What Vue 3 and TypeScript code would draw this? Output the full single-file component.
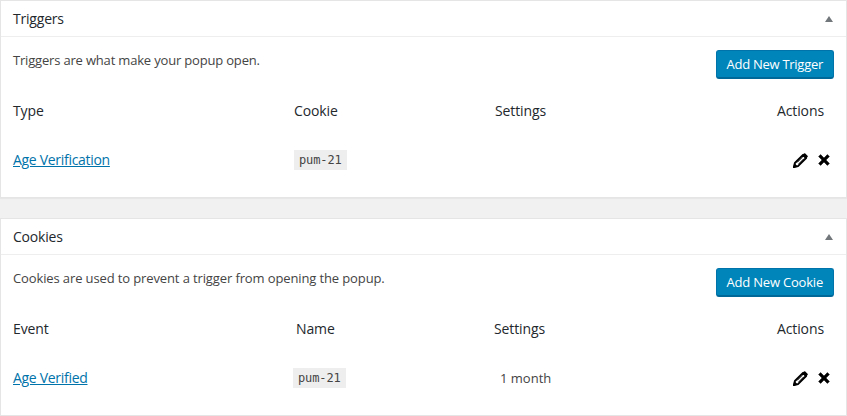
<script setup lang="ts">
interface Panel {
  key: string
  title: string
  intro: string
  button: string
  heads: [string, string, string, string]
  link: string
  setting: string
}
const panels: Panel[] = [
  { key: 'triggers', title: 'Triggers', intro: 'Triggers are what make your popup open.', button: 'Add New Trigger', heads: ['Type', 'Cookie', 'Settings', 'Actions'], link: 'Age Verification', setting: '' },
  { key: 'cookies', title: 'Cookies', intro: 'Cookies are used to prevent a trigger from opening the popup.', button: 'Add New Cookie', heads: ['Event', 'Name', 'Settings', 'Actions'], link: 'Age Verified', setting: '1 month' }
]
</script>

<template>
  <div class="page">
    <section v-for="p in panels" :key="p.key" class="panel" :class="p.key">
      <header class="head">
        <h2>{{ p.title }}</h2>
        <span class="arrow"></span>
      </header>
      <div class="body">
        <div class="intro">
          <p>{{ p.intro }}</p>
          <button type="button" class="btn">{{ p.button }}</button>
        </div>
        <div class="row heads">
          <span>{{ p.heads[0] }}</span>
          <span>{{ p.heads[1] }}</span>
          <span>{{ p.heads[2] }}</span>
          <span class="end">{{ p.heads[3] }}</span>
        </div>
        <div class="row item">
          <a href="#" class="link">{{ p.link }}</a>
          <span class="code-cell"><code>pum-21</code></span>
          <span class="setting">{{ p.setting }}</span>
          <span class="actions">
            <svg width="15" height="15" viewBox="0 0 15 15" aria-hidden="true">
              <path d="M.8 14.2 1.9 10 10 1.9 13.1 5 5 13.1Z" fill="#fff" stroke="#000" stroke-width="1.9" stroke-linejoin="round" />
              <path d="M9.2 2.2 10.9.5a1 1 0 0 1 1.4 0l2.2 2.2a1 1 0 0 1 0 1.4l-1.7 1.7ZM.4 14.6l.9-4.6 3.7 3.7Z" fill="#000" />
              <path d="M4.2 9.4 9.4 4.2M5.7 10.9l5.2-5.2" stroke="#000" stroke-width="1" fill="none" />
            </svg>
            <svg width="12" height="12" viewBox="0 0 12 12" aria-hidden="true">
              <path d="M2.6.6 6 4 9.4.6 11.4 2.6 8 6l3.4 3.4-2 2L6 8l-3.4 3.4-2-2L4 6 .6 2.6Z" fill="#000" stroke="#000" stroke-width=".5" stroke-linejoin="round" />
            </svg>
          </span>
        </div>
      </div>
    </section>
  </div>
</template>

<style scoped>
.page {
  width: 847px;
  height: 416px;
  background: #f1f1f1;
  font-family: "Open Sans", "Noto Sans", sans-serif;
  font-size: 13px;
  color: #444;
  display: flex;
  flex-direction: column;
  gap: 20px;
  overflow: hidden;
}
.panel {
  background: #fff;
  border: 1px solid #e5e5e5;
  box-shadow: 0 1px 1px rgba(0, 0, 0, 0.04);
  height: 198px;
  flex: none;
  box-sizing: border-box;
}
.head {
  height: 35px;
  border-bottom: 1px solid #eee;
  display: flex;
  align-items: center;
  justify-content: space-between;
  padding: 0 13px 0 12px;
}
h2 {
  margin: 0;
  font-size: 14px;
  font-weight: 500;
  color: #23282d;
  letter-spacing: -0.2px;
}
.arrow {
  width: 0;
  height: 0;
  border-left: 4px solid transparent;
  border-right: 4px solid transparent;
  border-bottom: 6px solid #72777c;
}
.body {
  padding: 0 12px;
}
.intro {
  height: 50px;
  display: flex;
  align-items: flex-start;
  justify-content: space-between;
}
.intro p {
  margin: 13px 0 0;
  letter-spacing: -0.18px;
  line-height: 20px;
}
.cookies .intro p {
  letter-spacing: -0.12px;
}
.btn {
  margin: 13px 0 0;
  height: 29px;
  padding: 0 10px;
  background: #0085ba;
  border: 1px solid #0073aa;
  border-bottom: 2px solid #006799;
  border-radius: 3px;
  color: #fff;
  font: inherit;
  letter-spacing: -0.2px;
}
.triggers .btn {
  letter-spacing: -0.27px;
}
.row {
  display: grid;
  align-items: center;
}
.triggers .row {
  grid-template-columns: 281px 201px 1fr auto;
}
.cookies .row {
  grid-template-columns: 283px 198px 1fr auto;
}
.heads {
  height: 49px;
  margin-top: -1px;
  color: #23282d;
  font-size: 14px;
  letter-spacing: -0.1px;
  font-weight: 500;
}
.item {
  height: 50px;
}
.heads .end {
  text-align: right;
  padding-right: 10px;
}
.link {
  color: #0073aa;
  text-decoration: underline;
  font-size: 14px;
  letter-spacing: -0.3px;
  margin-bottom: 2px;
}
code {
  display: inline-block;
  background: #eee;
  font-family: "DejaVu Sans Mono", monospace;
  font-size: 12px;
  line-height: 20px;
  padding: 0 5px;
  color: #444;
  letter-spacing: -0.1px;
}
.cookies .code-cell {
  margin-left: -3px;
}
.setting {
  padding-left: 6px;
}
.actions {
  display: flex;
  align-items: center;
  justify-content: flex-end;
  gap: 10px;
  padding-right: 4px;
}
</style>

<style>
html, body { background: #f1f1f1; }
</style>
